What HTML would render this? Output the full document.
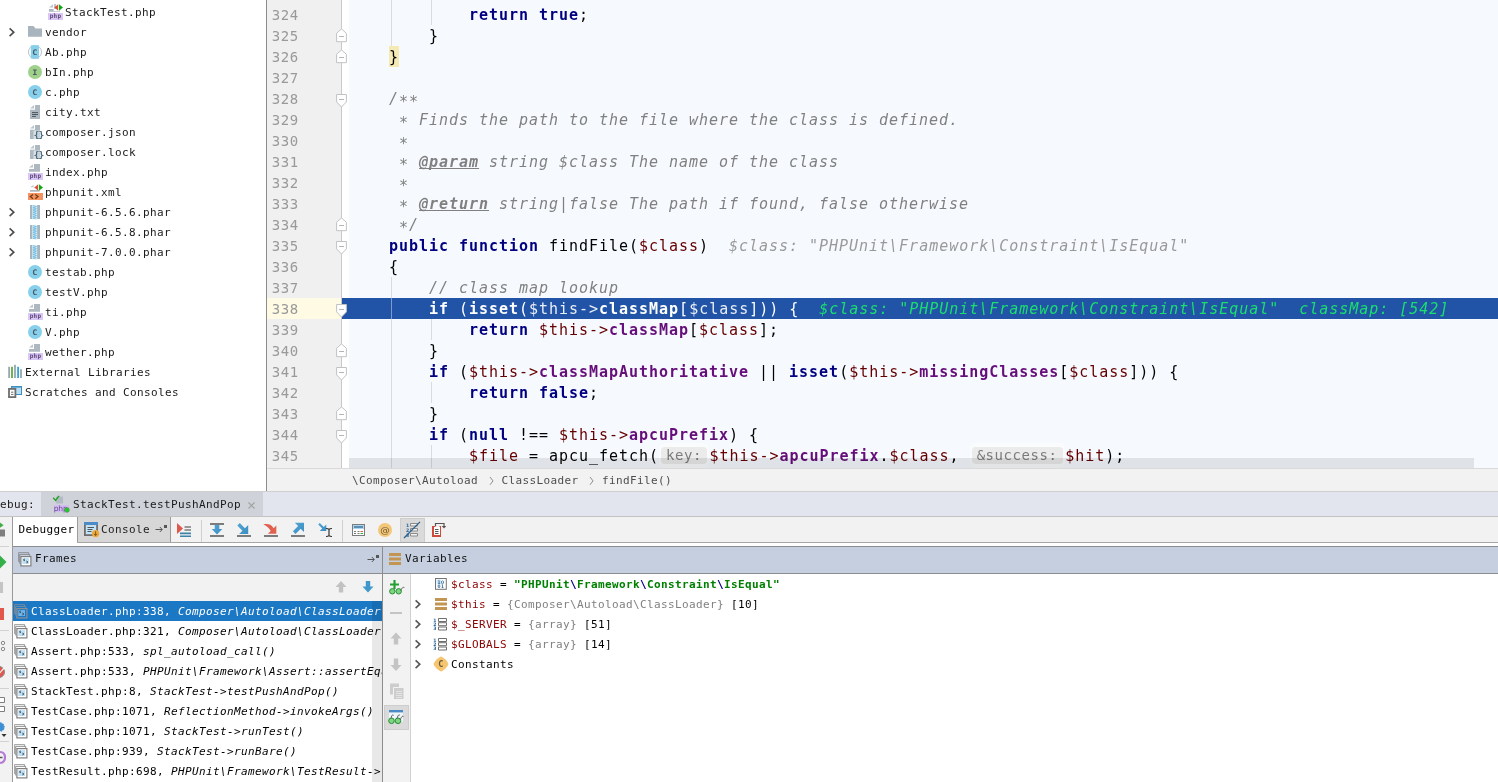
<!DOCTYPE html>
<html lang="en"><head><meta charset="utf-8"><title>PhpStorm debugger</title>
<style>
html,body{margin:0;padding:0}
body{width:1498px;height:782px;position:relative;overflow:hidden;background:#fff;font-family:"DejaVu Sans Mono","Liberation Mono",monospace;color:#000}
div,span,svg{position:absolute;box-sizing:border-box}
#tree,#ed,#dbg{will-change:transform}
span.i{position:static}
b,i,u,em,s{position:static}
/* project tree */
#tree{left:0;top:0;width:266px;height:491px;background:#fff;overflow:hidden}
.tr{left:0;width:266px;height:20px;line-height:20px;font-size:11px;letter-spacing:0.377px;white-space:pre;color:#1a1a1a}
.tr .t{top:1px}
/* editor */
#ed{left:266px;top:0;width:1232px;height:491px;overflow:hidden;background:#fff}
#gut{left:1px;top:0;width:74px;height:468px;background:#f0f0f0}
#code{left:83px;top:0;width:1149px;height:468px;background:#f6faff}
.ln{left:0;width:74px;height:21px;line-height:21px;font-size:14px;letter-spacing:0.57px;color:#999;white-space:pre;padding-left:4.8px}
.cl{left:0;width:1149px;height:21px;line-height:21px;font-size:15px;letter-spacing:0.97px;white-space:pre;color:#000}
.k{color:#000080;font-weight:bold}
.v{color:#660000}
.f{color:#660e7a;font-weight:bold}
.c{color:#808080;font-style:italic}
.dt{color:#808080;font-style:italic;font-weight:bold;text-decoration:underline;text-decoration-skip-ink:none}
span.as{position:relative;top:2.5px}
.dv{color:#999;font-style:italic}
.hl{color:#fff}
.hl .k,.hl .f{color:#fff}
.hl .v{color:#e9edf6}
.hl .dv{color:#1bde6e}
.ph{position:static;display:inline-block;height:17px;line-height:17px;vertical-align:top;margin:1px 2.5px 0 2px;background:#ebebeb;border-radius:4px;color:#7c7c7c;font-size:14px;letter-spacing:0.57px;padding:0 5px;box-shadow:0 -2px 0 2px #fafbfd,0 2px 0 2px #fafbfd}
.sep{display:inline-block;position:relative !important;width:23.5px;height:20px;vertical-align:top}
.g{width:1px;background:#dcdcdc}
/* debug */
#dbg{left:0;top:491px;width:1498px;height:291px;background:#f2f2f2;overflow:hidden}
.ui{font-size:11px;letter-spacing:0.377px;white-space:pre;line-height:20px;height:20px}
.fr{left:13px;width:369px;height:20px;line-height:20px;font-size:11px;letter-spacing:0.377px;white-space:pre;overflow:hidden;color:#000}
.fr .t{left:18px;top:1px}
.fr i{font-style:italic}
.vr{left:411px;width:1087px;height:20px;line-height:20px;font-size:11px;letter-spacing:0.377px;white-space:pre;color:#000}
.vr .t{left:40px;top:1px}
.vn{color:#8b0000}
.gy{color:#808080}
</style></head>
<body>
<div id="tree">
<div class="tr" style="top:2px"><svg style="left:48px;top:2px" width="16" height="16" viewBox="0 0 16 16"><path d="M6 0H12V7.800H1V5.100H6z" fill="#adb8c0"/><path d="M1 3.600L5 0.300V3.600z" fill="#bcc6cd"/><path d="M5.600 0H15.500V7.200H5.600z" fill="#fff"/><path d="M6 0H8V5.100H6z" fill="#bcc6cd"/><path d="M6.200 3.500L10.200 0.200V6.800z" fill="#d9523f"/><path d="M11 0.200L15 3.500L11 6.800z" fill="#0ea80e"/><rect x="0" y="9" width="15" height="7" fill="#d9c7f5"/><text x="1.700" y="14.300" font-size="6.300" font-family="DejaVu Sans Condensed,DejaVu Sans,Liberation Sans,sans-serif" font-weight="bold" fill="#5f4778" textLength="11.600" lengthAdjust="spacingAndGlyphs">php</text></svg><span class="t" style="left:65px">StackTest.php</span></div>
<div class="tr" style="top:22px"><svg style="left:7px;top:4px" width="10" height="12" viewBox="0 0 10 12"><path d="M2.600 2.300L6.800 6.200L2.600 10.100" fill="none" stroke="#4d4d4d" stroke-width="1.600"/></svg><svg style="left:28px;top:2px" width="16" height="16" viewBox="0 0 16 16"><path d="M0 2H5.500L7.500 4.500H14V12.800H0z" fill="#a9b5be"/></svg><span class="t" style="left:45px">vendor</span></div>
<div class="tr" style="top:42px"><svg style="left:28px;top:2px" width="16" height="16" viewBox="0 0 16 16"><circle cx="7" cy="8" r="6.500" fill="none" stroke="#b9c1c8" stroke-width="1"/><rect x="2.800" y="1.300" width="8.200" height="13.300" fill="#87d0ec"/><text x="4.200" y="10.800" font-size="7.600" font-family="DejaVu Sans Mono,Liberation Mono,monospace" font-weight="bold" fill="#4a5a64" textLength="5.600" lengthAdjust="spacingAndGlyphs">C</text></svg><span class="t" style="left:45px">Ab.php</span></div>
<div class="tr" style="top:62px"><svg style="left:28px;top:2px" width="16" height="16" viewBox="0 0 16 16"><circle cx="7" cy="8" r="7" fill="#9fd18b"/><text x="4.200" y="10.800" font-size="7.600" font-family="DejaVu Sans Mono,Liberation Mono,monospace" font-weight="bold" fill="#4a5a64" textLength="5.600" lengthAdjust="spacingAndGlyphs">I</text></svg><span class="t" style="left:45px">bIn.php</span></div>
<div class="tr" style="top:82px"><svg style="left:28px;top:2px" width="16" height="16" viewBox="0 0 16 16"><circle cx="7" cy="8" r="7" fill="#87d0ec"/><text x="4.200" y="10.800" font-size="7.600" font-family="DejaVu Sans Mono,Liberation Mono,monospace" font-weight="bold" fill="#4a5a64" textLength="5.600" lengthAdjust="spacingAndGlyphs">C</text></svg><span class="t" style="left:45px">c.php</span></div>
<div class="tr" style="top:102px"><svg style="left:28px;top:2px" width="16" height="16" viewBox="0 0 16 16"><path d="M7 1H12V15H2V5.700H7z" fill="#adb8c0"/><path d="M2 4.600L6 1V4.600z" fill="#bcc6cd"/><path d="M4 8.600h6M4 10.500h6M4 12.400h4" stroke="#4c565c" stroke-width="1" fill="none"/></svg><span class="t" style="left:45px">city.txt</span></div>
<div class="tr" style="top:122px"><svg style="left:28px;top:2px" width="16" height="16" viewBox="0 0 16 16"><path d="M7 1H12V15H2V5.700H7z" fill="#adb8c0"/><path d="M2 4.600L6 1V4.600z" fill="#bcc6cd"/><path d="M5.500 6.500H15V15H5.500z" fill="#fff" opacity="0.550"/><path d="M5 6.500h4.500M5 15.500h4" stroke="#fff" stroke-width="0"/><text x="10.500" y="14" font-size="9.500" font-family="DejaVu Sans Mono,Liberation Mono,monospace" font-weight="bold" fill="#44687f" text-anchor="middle" letter-spacing="-1">{}</text><path d="M9.800 8.500v5M11.200 8.500v5" stroke="#b3bec6" stroke-width="0.700"/></svg><span class="t" style="left:45px">composer.json</span></div>
<div class="tr" style="top:142px"><svg style="left:28px;top:2px" width="16" height="16" viewBox="0 0 16 16"><path d="M7 1H12V15H2V5.700H7z" fill="#adb8c0"/><path d="M2 4.600L6 1V4.600z" fill="#bcc6cd"/><path d="M5.500 6.500H15V15H5.500z" fill="#fff" opacity="0.550"/><path d="M5 6.500h4.500M5 15.500h4" stroke="#fff" stroke-width="0"/><text x="10.500" y="14" font-size="9.500" font-family="DejaVu Sans Mono,Liberation Mono,monospace" font-weight="bold" fill="#44687f" text-anchor="middle" letter-spacing="-1">{}</text><path d="M9.800 8.500v5M11.200 8.500v5" stroke="#b3bec6" stroke-width="0.700"/></svg><span class="t" style="left:45px">composer.lock</span></div>
<div class="tr" style="top:162px"><svg style="left:28px;top:2px" width="16" height="16" viewBox="0 0 16 16"><path d="M6 0H12V7.800H1V5.100H6z" fill="#adb8c0"/><path d="M1 3.600L5 0.300V3.600z" fill="#bcc6cd"/><rect x="0" y="9" width="15" height="7" fill="#d9c7f5"/><text x="1.700" y="14.300" font-size="6.300" font-family="DejaVu Sans Condensed,DejaVu Sans,Liberation Sans,sans-serif" font-weight="bold" fill="#5f4778" textLength="11.600" lengthAdjust="spacingAndGlyphs">php</text></svg><span class="t" style="left:45px">index.php</span></div>
<div class="tr" style="top:182px"><svg style="left:28px;top:2px" width="16" height="16" viewBox="0 0 16 16"><path d="M2 3.300L5.500 1V3.300z" fill="#bcc6cd"/><path d="M2 6H11.500V7.700H2z" fill="#adb8c0"/><path d="M6.200 3.500L10.200 0.200V6.800z" fill="#d9523f"/><path d="M11 0.200L15 3.500L11 6.800z" fill="#0ea80e"/><rect x="0" y="9" width="15" height="7" fill="#f4935f"/><path d="M5 10.400L2.300 12.600L5 14.800M7.300 10.400L10 12.600L7.300 14.800" stroke="#6b3a1c" stroke-width="1.300" fill="none"/></svg><span class="t" style="left:45px">phpunit.xml</span></div>
<div class="tr" style="top:202px"><svg style="left:7px;top:4px" width="10" height="12" viewBox="0 0 10 12"><path d="M2.600 2.300L6.800 6.200L2.600 10.100" fill="none" stroke="#4d4d4d" stroke-width="1.600"/></svg><svg style="left:28px;top:2px" width="16" height="16" viewBox="0 0 16 16"><rect x="2" y="1" width="10" height="14" fill="#a9b5be"/><rect x="4.500" y="1" width="4.600" height="14" fill="#fff"/><path d="M5 1.500L8.6 2.4L5 3.3L8.6 4.2L5 5.1L8.6 6.0L5 6.9L8.6 7.8L5 8.7L8.6 9.6L5 10.5L8.6 11.4L5 12.3L8.6 13.2L5 14.1L8.6 15.0" fill="none" stroke="#4ab0e0" stroke-width="0.700"/></svg><span class="t" style="left:45px">phpunit-6.5.6.phar</span></div>
<div class="tr" style="top:222px"><svg style="left:7px;top:4px" width="10" height="12" viewBox="0 0 10 12"><path d="M2.600 2.300L6.800 6.200L2.600 10.100" fill="none" stroke="#4d4d4d" stroke-width="1.600"/></svg><svg style="left:28px;top:2px" width="16" height="16" viewBox="0 0 16 16"><rect x="2" y="1" width="10" height="14" fill="#a9b5be"/><rect x="4.500" y="1" width="4.600" height="14" fill="#fff"/><path d="M5 1.500L8.6 2.4L5 3.3L8.6 4.2L5 5.1L8.6 6.0L5 6.9L8.6 7.8L5 8.7L8.6 9.6L5 10.5L8.6 11.4L5 12.3L8.6 13.2L5 14.1L8.6 15.0" fill="none" stroke="#4ab0e0" stroke-width="0.700"/></svg><span class="t" style="left:45px">phpunit-6.5.8.phar</span></div>
<div class="tr" style="top:242px"><svg style="left:7px;top:4px" width="10" height="12" viewBox="0 0 10 12"><path d="M2.600 2.300L6.800 6.200L2.600 10.100" fill="none" stroke="#4d4d4d" stroke-width="1.600"/></svg><svg style="left:28px;top:2px" width="16" height="16" viewBox="0 0 16 16"><rect x="2" y="1" width="10" height="14" fill="#a9b5be"/><rect x="4.500" y="1" width="4.600" height="14" fill="#fff"/><path d="M5 1.500L8.6 2.4L5 3.3L8.6 4.2L5 5.1L8.6 6.0L5 6.9L8.6 7.8L5 8.7L8.6 9.6L5 10.5L8.6 11.4L5 12.3L8.6 13.2L5 14.1L8.6 15.0" fill="none" stroke="#4ab0e0" stroke-width="0.700"/></svg><span class="t" style="left:45px">phpunit-7.0.0.phar</span></div>
<div class="tr" style="top:262px"><svg style="left:28px;top:2px" width="16" height="16" viewBox="0 0 16 16"><circle cx="7" cy="8" r="7" fill="#87d0ec"/><text x="4.200" y="10.800" font-size="7.600" font-family="DejaVu Sans Mono,Liberation Mono,monospace" font-weight="bold" fill="#4a5a64" textLength="5.600" lengthAdjust="spacingAndGlyphs">C</text></svg><span class="t" style="left:45px">testab.php</span></div>
<div class="tr" style="top:282px"><svg style="left:28px;top:2px" width="16" height="16" viewBox="0 0 16 16"><circle cx="7" cy="8" r="7" fill="#87d0ec"/><text x="4.200" y="10.800" font-size="7.600" font-family="DejaVu Sans Mono,Liberation Mono,monospace" font-weight="bold" fill="#4a5a64" textLength="5.600" lengthAdjust="spacingAndGlyphs">C</text></svg><span class="t" style="left:45px">testV.php</span></div>
<div class="tr" style="top:302px"><svg style="left:28px;top:2px" width="16" height="16" viewBox="0 0 16 16"><path d="M6 0H12V7.800H1V5.100H6z" fill="#adb8c0"/><path d="M1 3.600L5 0.300V3.600z" fill="#bcc6cd"/><rect x="0" y="9" width="15" height="7" fill="#d9c7f5"/><text x="1.700" y="14.300" font-size="6.300" font-family="DejaVu Sans Condensed,DejaVu Sans,Liberation Sans,sans-serif" font-weight="bold" fill="#5f4778" textLength="11.600" lengthAdjust="spacingAndGlyphs">php</text></svg><span class="t" style="left:45px">ti.php</span></div>
<div class="tr" style="top:322px"><svg style="left:28px;top:2px" width="16" height="16" viewBox="0 0 16 16"><circle cx="7" cy="8" r="7" fill="#87d0ec"/><text x="4.200" y="10.800" font-size="7.600" font-family="DejaVu Sans Mono,Liberation Mono,monospace" font-weight="bold" fill="#4a5a64" textLength="5.600" lengthAdjust="spacingAndGlyphs">C</text></svg><span class="t" style="left:45px">V.php</span></div>
<div class="tr" style="top:342px"><svg style="left:28px;top:2px" width="16" height="16" viewBox="0 0 16 16"><path d="M6 0H12V7.800H1V5.100H6z" fill="#adb8c0"/><path d="M1 3.600L5 0.300V3.600z" fill="#bcc6cd"/><rect x="0" y="9" width="15" height="7" fill="#d9c7f5"/><text x="1.700" y="14.300" font-size="6.300" font-family="DejaVu Sans Condensed,DejaVu Sans,Liberation Sans,sans-serif" font-weight="bold" fill="#5f4778" textLength="11.600" lengthAdjust="spacingAndGlyphs">php</text></svg><span class="t" style="left:45px">wether.php</span></div>
<div class="tr" style="top:362px"><svg style="left:0px;top:0px" width="24" height="20" viewBox="0 0 24 20"><rect x="8.200" y="4.800" width="1.800" height="11.200" fill="#9aa7b0"/><rect x="11.100" y="4.800" width="1.800" height="11.200" fill="#5bb03a"/><rect x="14.100" y="2.800" width="1.800" height="13.200" fill="#9aa7b0"/><rect x="17.200" y="4.800" width="1.800" height="11.200" fill="#2fa6dc"/><rect x="20.100" y="7.200" width="1.800" height="8.800" fill="#9aa7b0"/></svg><span class="t" style="left:25px">External Libraries</span></div>
<div class="tr" style="top:382px"><svg style="left:0px;top:0px" width="24" height="20" viewBox="0 0 24 20"><rect x="11.500" y="4.500" width="10" height="8" fill="#b9dff6" stroke="#3d8fc0" stroke-width="1"/><rect x="11" y="4" width="11" height="1.600" fill="#3d8fc0"/><rect x="9" y="6.900" width="6.400" height="8.200" fill="#fff" stroke="#6e6e6e" stroke-width="1.800"/><path d="M11 10.200h2.400M11 12.400h2.400" stroke="#6e6e6e" stroke-width="1"/></svg><span class="t" style="left:25px">Scratches and Consoles</span></div>
</div>
<div id="ed">
<div style="left:0;top:0;width:1px;height:491px;background:#8c8c8c"></div>
<div id="gut">
<div style="left:0;top:298px;width:74px;height:21px;background:#fffae3"></div>
<div class="ln" style="top:5px">324</div>
<div class="ln" style="top:26px">325</div>
<div class="ln" style="top:47px">326</div>
<div class="ln" style="top:68px">327</div>
<div class="ln" style="top:89px">328</div>
<div class="ln" style="top:110px">329</div>
<div class="ln" style="top:131px">330</div>
<div class="ln" style="top:152px">331</div>
<div class="ln" style="top:173px">332</div>
<div class="ln" style="top:194px">333</div>
<div class="ln" style="top:215px">334</div>
<div class="ln" style="top:236px">335</div>
<div class="ln" style="top:257px">336</div>
<div class="ln" style="top:278px">337</div>
<div class="ln" style="top:299px">338</div>
<div class="ln" style="top:320px">339</div>
<div class="ln" style="top:341px">340</div>
<div class="ln" style="top:362px">341</div>
<div class="ln" style="top:383px">342</div>
<div class="ln" style="top:404px">343</div>
<div class="ln" style="top:425px">344</div>
<div class="ln" style="top:446px">345</div>
</div>
<div id="code">
<div style="left:-7px;top:298px;width:1156px;height:21px;background:#2154a6"></div>
<div style="left:40px;top:46px;width:10px;height:21px;background:#f5eab3"></div>
<div class="g" style="left:42px;top:0px;height:46px;background:#dcdcdc"></div>
<div class="g" style="left:82px;top:0px;height:25px;background:#dcdcdc"></div>
<div class="g" style="left:42px;top:277px;height:21px;background:#dcdcdc"></div>
<div class="g" style="left:42px;top:298px;height:21px;background:#7f9bcc"></div>
<div class="g" style="left:42px;top:319px;height:149px;background:#dcdcdc"></div>
<div class="g" style="left:82px;top:319px;height:21px;background:#dcdcdc"></div>
<div class="g" style="left:82px;top:382px;height:21px;background:#dcdcdc"></div>
<div class="g" style="left:82px;top:445px;height:23px;background:#dcdcdc"></div>
<div class="cl" style="top:5px">            <span class="i k">return</span> <span class="i k">true</span>;</div>
<div class="cl" style="top:26px">        }</div>
<div class="cl" style="top:47px">    }</div>
<div class="cl" style="top:68px"></div>
<div class="cl" style="top:89px"><span class="i c">    /<span class="as">*</span><span class="as">*</span></span></div>
<div class="cl" style="top:110px"><span class="i c">     <span class="as">*</span> Finds the path to the file where the class is defined.</span></div>
<div class="cl" style="top:131px"><span class="i c">     <span class="as">*</span></span></div>
<div class="cl" style="top:152px"><span class="i c">     <span class="as">*</span> </span><span class="i dt">@param</span><span class="i c"> string $class The name of the class</span></div>
<div class="cl" style="top:173px"><span class="i c">     <span class="as">*</span></span></div>
<div class="cl" style="top:194px"><span class="i c">     <span class="as">*</span> </span><span class="i dt">@return</span><span class="i c"> string|false The path if found, false otherwise</span></div>
<div class="cl" style="top:215px"><span class="i c">     <span class="as">*</span>/</span></div>
<div class="cl" style="top:236px">    <span class="i k">public</span> <span class="i k">function</span> findFile(<span class="i v">$class</span>)<span class="i dv">  $class: &quot;PHPUnit\Framework\Constraint\IsEqual&quot;</span></div>
<div class="cl" style="top:257px">    {</div>
<div class="cl" style="top:278px"><span class="i c">        // class map lookup</span></div>
<div class="cl hl" style="top:299px">        <span class="i k">if</span> (<span class="i k">isset</span>(<span class="i v">$this-&gt;</span><span class="i f">classMap</span>[<span class="i v">$class</span>])) {<span class="i dv">  $class: &quot;PHPUnit\Framework\Constraint\IsEqual&quot;  classMap: [542]</span></div>
<div class="cl" style="top:320px">            <span class="i k">return</span> <span class="i v">$this-&gt;</span><span class="i f">classMap</span>[<span class="i v">$class</span>];</div>
<div class="cl" style="top:341px">        }</div>
<div class="cl" style="top:362px">        <span class="i k">if</span> (<span class="i v">$this-&gt;</span><span class="i f">classMapAuthoritative</span> || <span class="i k">isset</span>(<span class="i v">$this-&gt;</span><span class="i f">missingClasses</span>[<span class="i v">$class</span>])) {</div>
<div class="cl" style="top:383px">            <span class="i k">return</span> <span class="i k">false</span>;</div>
<div class="cl" style="top:404px">        }</div>
<div class="cl" style="top:425px">        <span class="i k">if</span> (<span class="i k">null</span> !== <span class="i v">$this-&gt;</span><span class="i f">apcuPrefix</span>) {</div>
<div class="cl" style="top:446px">            <span class="i v">$file</span> = apcu_fetch(<span class="ph">key:</span><span class="i v">$this-&gt;</span><span class="i f">apcuPrefix</span>.<span class="i v">$class</span>, <span class="ph">&amp;success:</span><span class="i v">$hit</span>);</div>
<div style="left:0;top:458px;width:1125px;height:10px;background:rgba(0,0,0,0.09)"></div>
</div>
<div style="left:75px;top:0;width:1px;height:468px;background:#c9c9c9"></div>
<svg style="left:69px;top:28px" width="13" height="16" viewBox="0 0 13 16"><path d="M1.600 13.700V5.300L6.500 0.900L11.400 5.300V13.700z" fill="#fff" stroke="#c2c2c2" stroke-width="1"/><path d="M4.100 8.500h4.900" stroke="#b4b4b4" stroke-width="1"/></svg>
<svg style="left:69px;top:49px" width="13" height="16" viewBox="0 0 13 16"><path d="M1.600 13.700V5.300L6.500 0.900L11.400 5.300V13.700z" fill="#fff" stroke="#c2c2c2" stroke-width="1"/><path d="M4.100 8.500h4.900" stroke="#b4b4b4" stroke-width="1"/></svg>
<svg style="left:69px;top:217px" width="13" height="16" viewBox="0 0 13 16"><path d="M1.600 13.700V5.300L6.500 0.900L11.400 5.300V13.700z" fill="#fff" stroke="#c2c2c2" stroke-width="1"/><path d="M4.100 8.500h4.900" stroke="#b4b4b4" stroke-width="1"/></svg>
<svg style="left:69px;top:343px" width="13" height="16" viewBox="0 0 13 16"><path d="M1.600 13.700V5.300L6.500 0.900L11.400 5.300V13.700z" fill="#fff" stroke="#c2c2c2" stroke-width="1"/><path d="M4.100 8.500h4.900" stroke="#b4b4b4" stroke-width="1"/></svg>
<svg style="left:69px;top:406px" width="13" height="16" viewBox="0 0 13 16"><path d="M1.600 13.700V5.300L6.500 0.900L11.400 5.300V13.700z" fill="#fff" stroke="#c2c2c2" stroke-width="1"/><path d="M4.100 8.500h4.900" stroke="#b4b4b4" stroke-width="1"/></svg>
<svg style="left:69px;top:94px" width="13" height="16" viewBox="0 0 13 16"><path d="M1.600 0.500V7.900L6.500 13L11.400 7.900V0.500z" fill="#fff" stroke="#c2c2c2" stroke-width="1"/><path d="M4.100 5.500h4.900" stroke="#b4b4b4" stroke-width="1"/></svg>
<svg style="left:69px;top:241px" width="13" height="16" viewBox="0 0 13 16"><path d="M1.600 0.500V7.900L6.500 13L11.400 7.900V0.500z" fill="#fff" stroke="#c2c2c2" stroke-width="1"/><path d="M4.100 5.500h4.900" stroke="#b4b4b4" stroke-width="1"/></svg>
<svg style="left:69px;top:304px" width="13" height="16" viewBox="0 0 13 16"><path d="M1.600 0.500V7.900L6.500 13L11.400 7.900V0.500z" fill="#fff" stroke="#c2c2c2" stroke-width="1"/><path d="M4.100 5.500h4.900" stroke="#b4b4b4" stroke-width="1"/></svg>
<svg style="left:69px;top:367px" width="13" height="16" viewBox="0 0 13 16"><path d="M1.600 0.500V7.900L6.500 13L11.400 7.900V0.500z" fill="#fff" stroke="#c2c2c2" stroke-width="1"/><path d="M4.100 5.500h4.900" stroke="#b4b4b4" stroke-width="1"/></svg>
<svg style="left:69px;top:430px" width="13" height="16" viewBox="0 0 13 16"><path d="M1.600 0.500V7.900L6.500 13L11.400 7.900V0.500z" fill="#fff" stroke="#c2c2c2" stroke-width="1"/><path d="M4.100 5.500h4.900" stroke="#b4b4b4" stroke-width="1"/></svg>
<div style="left:1px;top:468px;width:1231px;height:23px;background:#f2f2f2;border-top:1px solid #d9d9d9"></div>
<div class="ui" style="left:86px;top:471px;color:#4d4d4d">\Composer\Autoload<span class="i sep"><svg style="left:10.500px;top:4.500px" width="6" height="10" viewBox="0 0 6 10"><path d="M1 1L4 4.900L1 8.800" fill="none" stroke="#8c8c8c" stroke-width="1"/></svg></span>ClassLoader<span class="i sep"><svg style="left:10.500px;top:4.500px" width="6" height="10" viewBox="0 0 6 10"><path d="M1 1L4 4.900L1 8.800" fill="none" stroke="#8c8c8c" stroke-width="1"/></svg></span>findFile()</div>
</div>
<div id="dbg">
<div style="left:0;top:0;width:1498px;height:1px;background:#cfcfcf"></div>
<div style="left:0;top:1px;width:1498px;height:24px;background:#e2e5ed"></div>
<div style="left:41px;top:1px;width:222px;height:24px;background:#cfd3d9"></div>
<div class="ui" style="left:-7px;top:4px;color:#1a1a1a">Debug:</div>
<svg style="left:52px;top:4px" width="18" height="18" viewBox="0 0 18 18"><path d="M4 1.5h7v7H4z" fill="#b3bcc4"/><rect x="2" y="10" width="15" height="7" fill="#d3bdf0"/><text x="8.6" y="16.2" font-size="7.6" font-family="DejaVu Sans,Liberation Sans,sans-serif" fill="#6b4b96" text-anchor="middle" letter-spacing="-0.2">php</text><path d="M1.2 2.8L3.6 5.4L7 0.9" fill="none" stroke="#27a22a" stroke-width="1.5"/><circle cx="15" cy="15" r="2.4" fill="#16d21e" stroke="#7c7c7c" stroke-width="0.6"/></svg>
<div class="ui" style="left:73px;top:4px;color:#1a1a1a">StackTest.testPushAndPop</div>
<svg style="left:247px;top:10px" width="9" height="9" viewBox="0 0 9 9"><path d="M1.5 1.5l6 6M7.5 1.5l-6 6" stroke="#a3a3a3" stroke-width="1.1"/></svg>
<div style="left:0;top:25px;width:1498px;height:1px;background:#c3c3c3"></div>
<div style="left:0;top:26px;width:12px;height:265px;background:#f2f2f2"></div>
<div style="left:12px;top:26px;width:1px;height:265px;background:#9a9a9a"></div>
<svg style="left:0;top:26px" width="12" height="265" viewBox="0 0 12 265"><path d="M0 5.5L3.6 8.2L0 10.8z" fill="#3fae46"/><rect x="0" y="12.5" width="5" height="7" fill="#7f7f7f"/><path d="M0 29.5h9" stroke="#d2d2d2"/><path d="M0 38.5L6.5 45L0 51.5z" fill="#35b047"/><rect x="0" y="65" width="3" height="11" fill="#c4c4c4"/><rect x="0" y="91" width="4" height="12" fill="#e2574c"/><path d="M0 113.5h9" stroke="#d2d2d2"/><circle cx="3" cy="126" r="1.7" fill="none" stroke="#8a8a8a"/><circle cx="3" cy="132" r="1.7" fill="none" stroke="#8a8a8a"/><circle cx="-1" cy="155" r="5.5" fill="#e2574c" stroke="#8a8a8a"/><path d="M-2 158L4 151" stroke="#f2f2f2" stroke-width="1.2"/><path d="M0 171.5h9" stroke="#d2d2d2"/><path d="M0 180.5h4.5v5H0M0 189.5h4.5v5H0" fill="#fff" stroke="#7f7f7f"/><path d="M0 206a3.6 3.6 0 1 1 0 8z" fill="#3f8fd2" stroke="#3f8fd2" stroke-width="1.5" stroke-dasharray="1.5 1"/><path d="M1.5 217h5L4 220z" fill="#333"/><path d="M0 224.5h9" stroke="#d2d2d2"/><path d="M0 235c4 0 5 3 5 5.5s-1 5-5 5.500" fill="none" stroke="#b57bd6" stroke-width="2.2"/><path d="M0 240.500h2.500" stroke="#555" stroke-width="1.5"/></svg>
<div style="left:13px;top:26px;width:64px;height:29px;background:#fff"></div>
<div class="ui" style="left:18.500px;top:29px;color:#000">Debugger</div>
<div style="left:77px;top:26px;width:94px;height:26px;background:#d7d7d7;border-left:1px solid #9c9c9c;border-right:1px solid #9c9c9c"></div>
<svg style="left:83px;top:30px" width="17" height="17" viewBox="0 0 17 17"><rect x="1" y="1" width="14" height="3" fill="#4b8bc8"/><path d="M1.900 4v10.100H12" fill="none" stroke="#6e6e6e" stroke-width="1.800"/><path d="M14.100 4v6" stroke="#6e6e6e" stroke-width="1.800"/><rect x="3" y="4.500" width="10" height="8.500" fill="#bfe4fb"/><path d="M4.500 6.500h6.500M4.500 8.500h5M4.500 10.500h4" stroke="#555" stroke-width="1"/><circle cx="12.600" cy="12.600" r="3.700" fill="#f2a93b"/><path d="M12.600 10.300v4M10.900 12.900l1.700 1.700l1.700-1.700" fill="none" stroke="#7a5a1e" stroke-width="1"/></svg>
<div class="ui" style="left:101px;top:29px;color:#222">Console</div>
<svg style="left:155px;top:33px" width="14" height="9" viewBox="0 0 14 9"><path d="M0.500 5.500h6.500M4.800 3l2.500 2.500L4.800 8" fill="none" stroke="#555" stroke-width="1"/><rect x="9" y="1" width="3" height="3" fill="#555"/></svg>
<div style="left:77px;top:51px;width:1421px;height:1px;background:#a6a6a6"></div>
<div style="left:77px;top:52px;width:1421px;height:3px;background:#fff"></div>
<div style="left:400px;top:27px;width:25px;height:24px;background:#dadada;border:1px solid #cdcdcd;border-bottom:0"></div>
<div style="left:201px;top:29px;width:1px;height:22px;background:#cfcfcf"></div>
<div style="left:342px;top:29px;width:1px;height:22px;background:#cfcfcf"></div>
<svg style="left:170px;top:26px" width="290" height="26" viewBox="170 517 290 26"><defs><linearGradient id="bl" x1="0" y1="0" x2="1" y2="1"><stop offset="0" stop-color="#56a6d8"/><stop offset="1" stop-color="#3a8dbf"/></linearGradient></defs><path d="M177 523L183 528.500L177 534z" fill="#e0584c"/><path d="M184.500 527h6.500M184.500 530h6.500" stroke="#7c7c7c" stroke-width="1.600"/><path d="M180 533.400h11M180 536.300h11" stroke="#3f82a8" stroke-width="1.600"/><path d="M210 524h14M210 536h14" stroke="#7c7c7c" stroke-width="2"/><path d="M214.700 525h4.600v4h3L217 534.600L211.700 529h3z" fill="url(#bl)"/><path d="M237 536h14" stroke="#7c7c7c" stroke-width="2"/><path d="M239.800 523.100L244.900 528.300L248.200 525V534.100H239.100L242.400 530.800L237.300 525.600z" fill="url(#bl)"/><path d="M264 536h14" stroke="#7c7c7c" stroke-width="2"/><path d="M263.400 524.300C268.200 523.200 272 524.800 273.600 528.200L276.300 525.600V533.800H267.900L270.700 531.100C269.300 528.300 266.800 526.300 263.400 524.300z" fill="#e2604f"/><path d="M291 536h14" stroke="#7c7c7c" stroke-width="2"/><path d="M294.800 522.800H304V532L300.700 528.700L295.500 533.900L292.900 531.300L298.100 526.100z" fill="url(#bl)"/><path d="M319.800 522.900L323.800 526.900L326.300 524.400V531H319.700L322.200 528.500L318.200 524.500z" fill="url(#bl)"/><path d="M326 528.500c1.500 0 2.600.3 3 1c.4-.7 1.500-1 3-1M326 536.500c1.500 0 2.600-.3 3-1c.4.700 1.500 1 3 1M329 529.500v6" fill="none" stroke="#333" stroke-width="1.200"/><rect x="352.500" y="524.500" width="12" height="11" fill="#fff" stroke="#7c7c7c"/><rect x="353" y="525" width="11" height="4" fill="#a9d5f3"/><rect x="354" y="526" width="9" height="2" fill="#5d8fb1"/><path d="M354 531.500h2M357.500 531.500h2M354 533.500h2M357.500 533.500h2" stroke="#7c7c7c" stroke-width="1"/><path d="M360.500 531.500h2.500" stroke="#e2574c" stroke-width="1"/><path d="M360.500 533.500h2.500" stroke="#22b53a" stroke-width="1"/><circle cx="385" cy="530" r="7" fill="#f4c678"/><text x="385" y="533.300" font-size="9.500" font-family="DejaVu Sans,Liberation Sans,sans-serif" fill="#6e5b38" text-anchor="middle">@</text><path d="M410.500 523.500h7v2.500h-7zM410.500 528.500h7v2.500h-7zM410.500 533.500h7v2.500h-7z" fill="#f4f4f4" stroke="#8a8a8a" stroke-width="1"/><text x="407.500" y="527" font-size="4.600" font-weight="bold" font-family="DejaVu Sans,Liberation Sans,sans-serif" fill="#2a6496" text-anchor="middle">1</text><text x="407.500" y="532" font-size="4.600" font-weight="bold" font-family="DejaVu Sans,Liberation Sans,sans-serif" fill="#2a6496" text-anchor="middle">2</text><text x="407.500" y="537" font-size="4.600" font-weight="bold" font-family="DejaVu Sans,Liberation Sans,sans-serif" fill="#2a6496" text-anchor="middle">3</text><path d="M404 538L420 521.800" stroke="#2a5f8c" stroke-width="1.200"/><path d="M432 526h3.500v8h4v-8h1.500v11h-9z" fill="#cf4a3c"/><rect x="434" y="527" width="6" height="8" fill="#fff"/><path d="M435 529.500h3.500M435 531.500h3.500M435 533.500h3.500" stroke="#555" stroke-width="1"/><path d="M435.500 526v-2.500h8.500v3" fill="none" stroke="#555" stroke-width="1.200"/><path d="M441.700 526h4.600L444 528.600z" fill="#555"/></svg>
<div style="left:13px;top:55px;width:1485px;height:1px;background:#8c8c8c"></div>
<div style="left:13px;top:56px;width:1485px;height:26px;background:#c5cfe0"></div>
<div style="left:13px;top:82px;width:1485px;height:1px;background:#8c8c8c"></div>
<svg style="left:18px;top:61px" width="14" height="15" viewBox="0 0 14 15"><path d="M0.600 10V0.600H10.600V2.300" fill="none" stroke="#808080" stroke-width="1" opacity="0.750"/><path d="M1.700 11.500V2.400H11.700V4.200" fill="none" stroke="#808080" stroke-width="1" opacity="0.850"/><rect x="2.900" y="4.600" width="10" height="9.300" fill="#fff" stroke="#808080" stroke-width="1.200"/><rect x="4.300" y="6.100" width="6.700" height="5.900" fill="#bde0f7"/><path d="M7 6.900L5.300 7.900L7 8.900M8.300 9L10 10L8.300 11" fill="none" stroke="#3a3a3a" stroke-width="0.800"/></svg>
<div class="ui" style="left:35px;top:58px;color:#111">Frames</div>
<svg style="left:367px;top:63px" width="14" height="9" viewBox="0 0 14 9"><path d="M0.500 5.500h6.500M4.800 3l2.500 2.500L4.800 8" fill="none" stroke="#555" stroke-width="1"/><rect x="9" y="1" width="3" height="3" fill="#555"/></svg>
<svg style="left:388px;top:61px" width="14" height="14" viewBox="0 0 14 14"><path d="M1 2.500h12M1 7h12M1 11.500h12" stroke="#c29552" stroke-width="3"/></svg>
<div class="ui" style="left:405px;top:58px;color:#111">Variables</div>
<svg style="left:334px;top:89px" width="42" height="14" viewBox="0 0 42 14"><path d="M7 1L12.500 7H9.200V12.500H4.800V7H1.500z" fill="#c2c2c2"/><path d="M34 12.500L39.500 6.500H36.200V1H31.800V6.500H28.500z" fill="#3f97cb"/></svg>
<div style="left:13px;top:110px;width:369px;height:181px;background:#fff"></div>
<div style="left:13px;top:110px;width:369px;height:20px;background:#1b78c4"></div>
<div class="fr" style="top:110px;color:#fff"><svg style="left:1px;top:3px" width="14" height="15" viewBox="0 0 14 15"><path d="M0.600 10V0.600H10.600V2.300" fill="none" stroke="#8b8f96" stroke-width="1" opacity="0.750"/><path d="M1.700 11.500V2.400H11.700V4.200" fill="none" stroke="#8b8f96" stroke-width="1" opacity="0.850"/><rect x="2.900" y="4.600" width="10" height="9.300" fill="none" stroke="#8b8f96" stroke-width="1.200"/><rect x="4.300" y="6.100" width="6.700" height="5.900" fill="#6db3e8"/><path d="M7 6.900L5.300 7.900L7 8.900M8.300 9L10 10L8.300 11" fill="none" stroke="#3a3a3a" stroke-width="0.800"/></svg><span class="t">ClassLoader.php:338, <i>Composer\Autoload\ClassLoader-&gt;findFile()</i></span></div>
<div class="fr" style="top:130px;color:#000"><svg style="left:1px;top:3px" width="14" height="15" viewBox="0 0 14 15"><path d="M0.600 10V0.600H10.600V2.300" fill="none" stroke="#808080" stroke-width="1" opacity="0.750"/><path d="M1.700 11.500V2.400H11.700V4.200" fill="none" stroke="#808080" stroke-width="1" opacity="0.850"/><rect x="2.900" y="4.600" width="10" height="9.300" fill="#fff" stroke="#808080" stroke-width="1.200"/><rect x="4.300" y="6.100" width="6.700" height="5.900" fill="#bde0f7"/><path d="M7 6.900L5.300 7.900L7 8.900M8.300 9L10 10L8.300 11" fill="none" stroke="#3a3a3a" stroke-width="0.800"/></svg><span class="t">ClassLoader.php:321, <i>Composer\Autoload\ClassLoader-&gt;loadClass()</i></span></div>
<div class="fr" style="top:150px;color:#000"><svg style="left:1px;top:3px" width="14" height="15" viewBox="0 0 14 15"><path d="M0.600 10V0.600H10.600V2.300" fill="none" stroke="#808080" stroke-width="1" opacity="0.750"/><path d="M1.700 11.500V2.400H11.700V4.200" fill="none" stroke="#808080" stroke-width="1" opacity="0.850"/><rect x="2.900" y="4.600" width="10" height="9.300" fill="#fff" stroke="#808080" stroke-width="1.200"/><rect x="4.300" y="6.100" width="6.700" height="5.900" fill="#bde0f7"/><path d="M7 6.900L5.300 7.900L7 8.900M8.300 9L10 10L8.300 11" fill="none" stroke="#3a3a3a" stroke-width="0.800"/></svg><span class="t">Assert.php:533, <i>spl_autoload_call()</i></span></div>
<div class="fr" style="top:170px;color:#000"><svg style="left:1px;top:3px" width="14" height="15" viewBox="0 0 14 15"><path d="M0.600 10V0.600H10.600V2.300" fill="none" stroke="#808080" stroke-width="1" opacity="0.750"/><path d="M1.700 11.500V2.400H11.700V4.200" fill="none" stroke="#808080" stroke-width="1" opacity="0.850"/><rect x="2.900" y="4.600" width="10" height="9.300" fill="#fff" stroke="#808080" stroke-width="1.200"/><rect x="4.300" y="6.100" width="6.700" height="5.900" fill="#bde0f7"/><path d="M7 6.900L5.300 7.900L7 8.900M8.300 9L10 10L8.300 11" fill="none" stroke="#3a3a3a" stroke-width="0.800"/></svg><span class="t">Assert.php:533, <i>PHPUnit\Framework\Assert::assertEquals()</i></span></div>
<div class="fr" style="top:190px;color:#000"><svg style="left:1px;top:3px" width="14" height="15" viewBox="0 0 14 15"><path d="M0.600 10V0.600H10.600V2.300" fill="none" stroke="#808080" stroke-width="1" opacity="0.750"/><path d="M1.700 11.500V2.400H11.700V4.200" fill="none" stroke="#808080" stroke-width="1" opacity="0.850"/><rect x="2.900" y="4.600" width="10" height="9.300" fill="#fff" stroke="#808080" stroke-width="1.200"/><rect x="4.300" y="6.100" width="6.700" height="5.900" fill="#bde0f7"/><path d="M7 6.900L5.300 7.900L7 8.900M8.300 9L10 10L8.300 11" fill="none" stroke="#3a3a3a" stroke-width="0.800"/></svg><span class="t">StackTest.php:8, <i>StackTest-&gt;testPushAndPop()</i></span></div>
<div class="fr" style="top:210px;color:#000"><svg style="left:1px;top:3px" width="14" height="15" viewBox="0 0 14 15"><path d="M0.600 10V0.600H10.600V2.300" fill="none" stroke="#808080" stroke-width="1" opacity="0.750"/><path d="M1.700 11.500V2.400H11.700V4.200" fill="none" stroke="#808080" stroke-width="1" opacity="0.850"/><rect x="2.900" y="4.600" width="10" height="9.300" fill="#fff" stroke="#808080" stroke-width="1.200"/><rect x="4.300" y="6.100" width="6.700" height="5.900" fill="#bde0f7"/><path d="M7 6.900L5.300 7.900L7 8.900M8.300 9L10 10L8.300 11" fill="none" stroke="#3a3a3a" stroke-width="0.800"/></svg><span class="t">TestCase.php:1071, <i>ReflectionMethod-&gt;invokeArgs()</i></span></div>
<div class="fr" style="top:230px;color:#000"><svg style="left:1px;top:3px" width="14" height="15" viewBox="0 0 14 15"><path d="M0.600 10V0.600H10.600V2.300" fill="none" stroke="#808080" stroke-width="1" opacity="0.750"/><path d="M1.700 11.500V2.400H11.700V4.200" fill="none" stroke="#808080" stroke-width="1" opacity="0.850"/><rect x="2.900" y="4.600" width="10" height="9.300" fill="#fff" stroke="#808080" stroke-width="1.200"/><rect x="4.300" y="6.100" width="6.700" height="5.900" fill="#bde0f7"/><path d="M7 6.900L5.300 7.900L7 8.900M8.300 9L10 10L8.300 11" fill="none" stroke="#3a3a3a" stroke-width="0.800"/></svg><span class="t">TestCase.php:1071, <i>StackTest-&gt;runTest()</i></span></div>
<div class="fr" style="top:250px;color:#000"><svg style="left:1px;top:3px" width="14" height="15" viewBox="0 0 14 15"><path d="M0.600 10V0.600H10.600V2.300" fill="none" stroke="#808080" stroke-width="1" opacity="0.750"/><path d="M1.700 11.500V2.400H11.700V4.200" fill="none" stroke="#808080" stroke-width="1" opacity="0.850"/><rect x="2.900" y="4.600" width="10" height="9.300" fill="#fff" stroke="#808080" stroke-width="1.200"/><rect x="4.300" y="6.100" width="6.700" height="5.900" fill="#bde0f7"/><path d="M7 6.900L5.300 7.900L7 8.900M8.300 9L10 10L8.300 11" fill="none" stroke="#3a3a3a" stroke-width="0.800"/></svg><span class="t">TestCase.php:939, <i>StackTest-&gt;runBare()</i></span></div>
<div class="fr" style="top:270px;color:#000"><svg style="left:1px;top:3px" width="14" height="15" viewBox="0 0 14 15"><path d="M0.600 10V0.600H10.600V2.300" fill="none" stroke="#808080" stroke-width="1" opacity="0.750"/><path d="M1.700 11.500V2.400H11.700V4.200" fill="none" stroke="#808080" stroke-width="1" opacity="0.850"/><rect x="2.900" y="4.600" width="10" height="9.300" fill="#fff" stroke="#808080" stroke-width="1.200"/><rect x="4.300" y="6.100" width="6.700" height="5.900" fill="#bde0f7"/><path d="M7 6.900L5.300 7.900L7 8.900M8.300 9L10 10L8.300 11" fill="none" stroke="#3a3a3a" stroke-width="0.800"/></svg><span class="t">TestResult.php:698, <i>PHPUnit\Framework\TestResult-&gt;run()</i></span></div>
<div style="left:372px;top:110px;width:10px;height:181px;background:rgba(0,0,0,0.09)"></div>
<div style="left:382px;top:56px;width:1px;height:235px;background:#8c8c8c"></div>
<div style="left:383px;top:83px;width:27px;height:208px;background:#f2f2f2"></div>
<div style="left:410px;top:83px;width:1px;height:208px;background:#d1d1d1"></div>
<div style="left:411px;top:83px;width:1087px;height:208px;background:#fff"></div>
<div style="left:384px;top:214px;width:25px;height:25px;background:#dadada;border:1px solid #cdcdcd"></div>
<svg style="left:383px;top:83px" width="27" height="160" viewBox="383 574 27 160"><path d="M394.500 580v9M390 584.500h9" stroke="#23a033" stroke-width="2.200"/><circle cx="392.300" cy="591.300" r="2.700" fill="#7ed67e" stroke="#2a8f3a" stroke-width="1"/><circle cx="398.700" cy="591.300" r="2.700" fill="#7ed67e" stroke="#2a8f3a" stroke-width="1"/><path d="M400.800 590.500c1.200-3 2.600-4 3.800-2.500" fill="none" stroke="#555" stroke-width="0.900"/><path d="M390 613h12" stroke="#c4c4c4" stroke-width="2"/><path d="M396 632.500L401.500 638.500H398.200V644.500H393.800V638.500H390.500z" fill="#c4c4c4"/><path d="M396 671L401.500 665H398.200V658.500H393.800V665H390.500z" fill="#c4c4c4"/><path d="M390 683.500h9v11h-9z" fill="#cdcdcd"/><path d="M393.500 687.500h10.500v12h-10.500z" fill="#cdcdcd" stroke="#f2f2f2" stroke-width="1"/><path d="M396 691.500h6M396 693.500h6M396 695.500h6M396 697.500h6" stroke="#e4e4e4" stroke-width="1"/><rect x="389" y="710" width="14" height="2.600" fill="#4b8bc8"/><rect x="389" y="712.600" width="14" height="9" fill="#eef6fc"/><circle cx="391.500" cy="720.800" r="2.800" fill="#7ed67e" stroke="#2a8f3a" stroke-width="1"/><circle cx="398" cy="720.800" r="2.800" fill="#7ed67e" stroke="#2a8f3a" stroke-width="1"/><path d="M391 718.500c.5-3 1.500-4.500 2.700-3M397 718.500c.8-3 1.800-4.500 3-3M400 720c1.500-3 2.500-5 3.500-3" fill="none" stroke="#555" stroke-width="0.900"/></svg>
<div class="vr" style="top:83px"><svg style="left:23px;top:3px" width="14" height="14" viewBox="0 0 14 14"><rect x="1.500" y="1.500" width="10.800" height="10.800" fill="#fff" stroke="#757575" stroke-width="1"/><rect x="2.500" y="2.500" width="4.500" height="5" fill="#cfe8fa"/><text x="6.900" y="6.700" font-size="4.800" font-weight="bold" font-family="DejaVu Sans Condensed,DejaVu Sans,Liberation Sans,sans-serif" fill="#2a6496" text-anchor="middle">10</text><text x="6.900" y="11.200" font-size="4.800" font-weight="bold" font-family="DejaVu Sans Condensed,DejaVu Sans,Liberation Sans,sans-serif" fill="#2a6496" text-anchor="middle">01</text></svg><span class="t"><span class="i vn">$class</span> = <b style="color:#008000">"PHPUnit</b><b style="color:#000080">\</b><b style="color:#008000">Framework</b><b style="color:#000080">\</b><b style="color:#008000">Constraint</b><b style="color:#000080">\</b><b style="color:#008000">IsEqual"</b></span></div>
<div class="vr" style="top:103px"><svg style="left:2px;top:4px" width="10" height="12" viewBox="0 0 10 12"><path d="M2.600 2.300L6.800 6.200L2.600 10.100" fill="none" stroke="#555" stroke-width="1.600"/></svg><svg style="left:23px;top:3px" width="14" height="14" viewBox="0 0 14 14"><path d="M1 2.500h12M1 7h12M1 11.500h12" stroke="#c29552" stroke-width="3"/></svg><span class="t"><span class="i vn">$this</span> = <span class="i gy">{Composer\Autoload\ClassLoader}</span> [10]</span></div>
<div class="vr" style="top:123px"><svg style="left:2px;top:4px" width="10" height="12" viewBox="0 0 10 12"><path d="M2.600 2.300L6.800 6.200L2.600 10.100" fill="none" stroke="#555" stroke-width="1.600"/></svg><svg style="left:22px;top:3px" width="15" height="14" viewBox="0 0 15 14"><path d="M5.500 1.500h8v3h-8zM5.500 5.700h8v3h-8zM5.500 10h8v3h-8z" fill="#fff" stroke="#6e6e6e" stroke-width="1"/><text x="2" y="4.600" font-size="4.600" font-weight="bold" font-family="DejaVu Sans,Liberation Sans,sans-serif" fill="#2a6496" text-anchor="middle">1</text><text x="2" y="9" font-size="4.600" font-weight="bold" font-family="DejaVu Sans,Liberation Sans,sans-serif" fill="#2a6496" text-anchor="middle">2</text><text x="2" y="13.400" font-size="4.600" font-weight="bold" font-family="DejaVu Sans,Liberation Sans,sans-serif" fill="#2a6496" text-anchor="middle">3</text></svg><span class="t"><span class="i vn">$_SERVER</span> = <span class="i gy">{array}</span> [51]</span></div>
<div class="vr" style="top:143px"><svg style="left:2px;top:4px" width="10" height="12" viewBox="0 0 10 12"><path d="M2.600 2.300L6.800 6.200L2.600 10.100" fill="none" stroke="#555" stroke-width="1.600"/></svg><svg style="left:22px;top:3px" width="15" height="14" viewBox="0 0 15 14"><path d="M5.500 1.500h8v3h-8zM5.500 5.700h8v3h-8zM5.500 10h8v3h-8z" fill="#fff" stroke="#6e6e6e" stroke-width="1"/><text x="2" y="4.600" font-size="4.600" font-weight="bold" font-family="DejaVu Sans,Liberation Sans,sans-serif" fill="#2a6496" text-anchor="middle">1</text><text x="2" y="9" font-size="4.600" font-weight="bold" font-family="DejaVu Sans,Liberation Sans,sans-serif" fill="#2a6496" text-anchor="middle">2</text><text x="2" y="13.400" font-size="4.600" font-weight="bold" font-family="DejaVu Sans,Liberation Sans,sans-serif" fill="#2a6496" text-anchor="middle">3</text></svg><span class="t"><span class="i vn">$GLOBALS</span> = <span class="i gy">{array}</span> [14]</span></div>
<div class="vr" style="top:163px"><svg style="left:2px;top:4px" width="10" height="12" viewBox="0 0 10 12"><path d="M2.600 2.300L6.800 6.200L2.600 10.100" fill="none" stroke="#555" stroke-width="1.600"/></svg><svg style="left:22px;top:2px" width="16" height="16" viewBox="0 0 16 16"><path d="M8 0.600Q9 0.600 12.500 3.500Q15.400 7 15.400 8Q15.400 9 12.500 12.500Q9 15.400 8 15.400Q7 15.400 3.500 12.500Q0.600 9 0.600 8Q0.600 7 3.500 3.500Q7 0.600 8 0.600z" fill="#f6c56f"/><text x="8" y="11" font-size="8.400" font-weight="bold" font-family="DejaVu Sans Mono,Liberation Mono,monospace" fill="#6b5a3c" text-anchor="middle">C</text></svg><span class="t">Constants</span></div>
</div>
</body></html>
